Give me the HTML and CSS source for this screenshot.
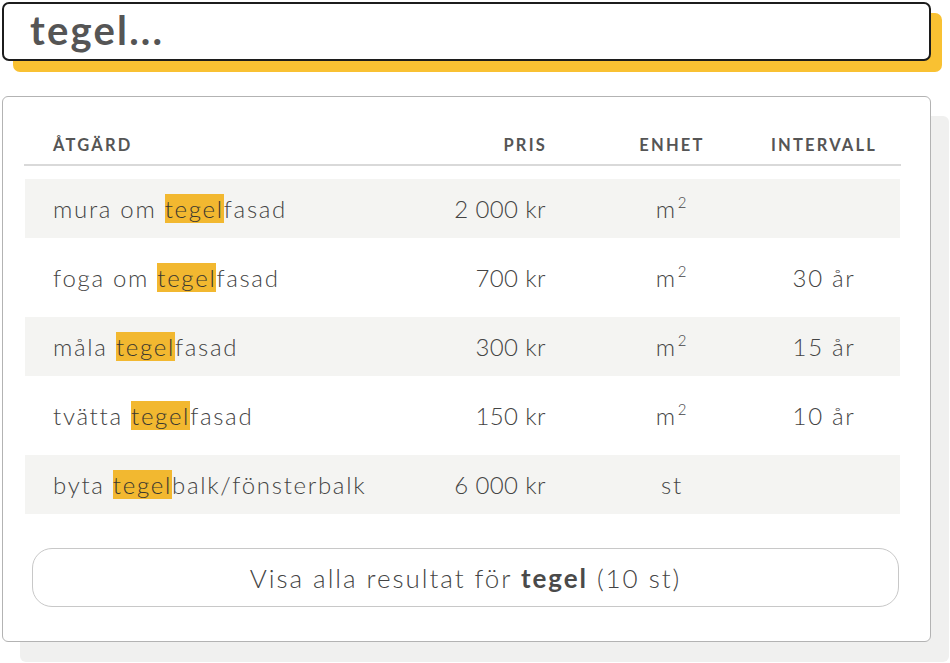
FILE: index.html
```html
<!DOCTYPE html>
<html lang="sv">
<head>
<meta charset="utf-8">
<title>Sök</title>
<link rel="stylesheet" href="styles.css">
</head>
<body>
<div class="page">
  <div class="search">
    <span class="search-text">tegel...</span>
  </div>
  <div class="card">
    <div class="grid head">
      <div class="c1">ÅTGÄRD</div>
      <div class="c2">PRIS</div>
      <div class="c3">ENHET</div>
      <div class="c4">INTERVALL</div>
    </div>
    <div class="rows">
      <div class="grid row shaded">
        <div class="c1">mura om <mark>tegel</mark>fasad</div>
        <div class="c2">2 000 kr</div>
        <div class="c3">m<sup>2</sup></div>
        <div class="c4"></div>
      </div>
      <div class="grid row">
        <div class="c1">foga om <mark>tegel</mark>fasad</div>
        <div class="c2">700 kr</div>
        <div class="c3">m<sup>2</sup></div>
        <div class="c4">30 år</div>
      </div>
      <div class="grid row shaded">
        <div class="c1">måla <mark>tegel</mark>fasad</div>
        <div class="c2">300 kr</div>
        <div class="c3">m<sup>2</sup></div>
        <div class="c4">15 år</div>
      </div>
      <div class="grid row">
        <div class="c1">tvätta <mark>tegel</mark>fasad</div>
        <div class="c2">150 kr</div>
        <div class="c3">m<sup>2</sup></div>
        <div class="c4">10 år</div>
      </div>
      <div class="grid row shaded">
        <div class="c1">byta <mark>tegel</mark>balk/fönsterbalk</div>
        <div class="c2">6 000 kr</div>
        <div class="c3">st</div>
        <div class="c4"></div>
      </div>
    </div>
    <button class="show-all">Visa alla resultat för <b>tegel</b> (10 st)</button>
  </div>
</div>
</body>
</html>
```

FILE: styles.css
```css
* { box-sizing: border-box; }
html, body { margin: 0; padding: 0; background: #fff; }
body {
  font-family: "Lato", "Liberation Sans", sans-serif;
  color: #555;
  width: 950px;
  height: 663px;
  overflow: hidden;
}
.page {
  padding: 2px 0 0 2px;
}
.search {
  width: 929px;
  height: 59px;
  border: 2px solid #1c1c1c;
  border-radius: 7px;
  background: #fff;
  box-shadow: 11px 11px 0 0 #f9c132;
  display: flex;
  align-items: center;
  padding-left: 26px;
}
.search-text {
  font-size: 40px;
  font-weight: 700;
  color: #555;
  letter-spacing: 2.2px;
  line-height: 1;
  margin-top: -3px;
}
.card {
  margin-top: 35px;
  width: 929px;
  height: 546px;
  border: 1px solid #b3b3b3;
  border-radius: 6px;
  background: #fff;
  box-shadow: 18px 20px 0 0 #f0f0ef;
  padding: 0 29px 0 21px;
}
.grid {
  display: grid;
  grid-template-columns: 421px 150px 152px 152px;
  align-items: center;
}
.head {
  padding: 38px 1px 9px;
  border-bottom: 2px solid #d9d9d9;
  font-size: 16.5px;
  line-height: 20px;
  font-weight: 700;
  letter-spacing: 2.2px;
  color: #555;
}
.c1 { padding-left: 28px; }
.c2 { text-align: right; padding-right: 49px; }
.c3 { text-align: center; }
.c4 { text-align: center; }
.head .c2 { padding-right: 49px; }
.row .c2 { letter-spacing: 0.4px; padding-right: 50px; }
.rows {
  margin: 13px 1px 0;
  display: flex;
  flex-direction: column;
  gap: 10px;
}
.row {
  height: 59px;
  font-size: 24px;
  letter-spacing: 1.7px;
  font-weight: 300;
  color: #444;
}
.row.shaded { background: #f4f4f2; }
mark {
  background: #f2b830;
  color: #3a372f;
  padding: 0;
}
sup {
  font-size: 15px;
  vertical-align: 0;
  position: relative;
  top: -10px;
  margin-left: 1px;
}
.show-all {
  display: block;
  margin: 34px 2px 0 8px;
  width: 867px;
  height: 59px;
  border: 1px solid #c8c8c8;
  border-radius: 20px;
  background: #fff;
  font-family: "Lato", "Liberation Sans", sans-serif;
  font-size: 26px;
  font-weight: 300;
  letter-spacing: 1.95px;
  color: #444;
  padding: 0;
  cursor: pointer;
}
.show-all b { font-weight: 700; color: #4a4a4a; }
```
